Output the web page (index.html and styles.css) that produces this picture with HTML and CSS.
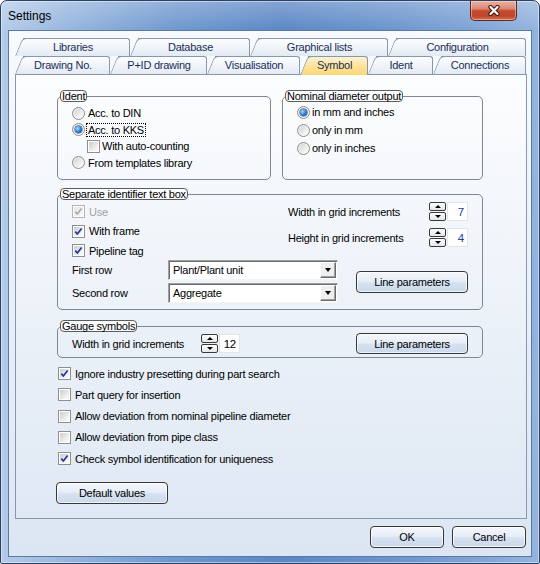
FILE: index.html
```html
<!DOCTYPE html>
<html>
<head>
<meta charset="utf-8">
<title>Settings</title>
<link rel="stylesheet" href="styles.css">
</head>
<body>
<div class="window">
  <div class="titlebar">
    <span class="title">Settings</span>
    <div class="close">
      <svg width="14" height="11" viewBox="0 0 14 11"><path d="M3.5 2 L10.5 9 M10.5 2 L3.5 9" stroke="#3a140c" stroke-width="4.2" stroke-linecap="round"/><path d="M3.5 2 L10.5 9 M10.5 2 L3.5 9" stroke="#fff" stroke-width="2.2" stroke-linecap="round"/></svg>
    </div>
  </div>
  <div class="client">
    <div class="tabrow">
      <div class="tab w-lib"><span>Libraries</span></div>
      <div class="tab w-db"><span>Database</span></div>
      <div class="tab w-gl"><span>Graphical lists</span></div>
      <div class="tab w-cfg"><span>Configuration</span></div>
    </div>
    <div class="tabrow">
      <div class="tab w-dn"><span>Drawing No.</span></div>
      <div class="tab w-pid"><span>P+ID drawing</span></div>
      <div class="tab w-vis"><span>Visualisation</span></div>
      <div class="tab sel w-sym"><span>Symbol</span></div>
      <div class="tab w-id"><span>Ident</span></div>
      <div class="tab w-con"><span>Connections</span></div>
    </div>
    <div class="panel">
      <div class="toprow">
        <fieldset class="group g-ident">
          <legend>Ident</legend>
          <div class="fs-body ident-body">
            <div class="row r-ident"><span class="radio"></span><span>Acc. to DIN</span></div>
            <div class="row r-ident"><span class="radio on"><span class="dot"></span></span><span class="focus">Acc. to KKS</span></div>
            <div class="row r-ident indent"><span class="cb"><span class="cb-in"></span></span><span class="cb-label">With auto-counting</span></div>
            <div class="row r-ident"><span class="radio"></span><span>From templates library</span></div>
          </div>
        </fieldset>
        <fieldset class="group g-nom">
          <legend>Nominal diameter output</legend>
          <div class="fs-body nom-body">
            <div class="row r-nom"><span class="radio on"><span class="dot"></span></span><span class="rlabel">in mm and inches</span></div>
            <div class="row r-nom"><span class="radio"></span><span class="rlabel">only in mm</span></div>
            <div class="row r-nom"><span class="radio"></span><span class="rlabel">only in inches</span></div>
          </div>
        </fieldset>
      </div>

      <fieldset class="group g-sep">
        <legend>Separate identifier text box</legend>
        <div class="fs-body sep-body">
          <div class="sep-top">
            <div class="sep-left">
              <div class="row h19 disabled"><span class="cb dis"><span class="cb-in"><svg width="9" height="9" viewBox="0 0 9 9"><path d="M1.3 4.6 L3.4 7 L7.6 1.6" fill="none" stroke="#a8a8a8" stroke-width="1.7"/></svg></span></span><span class="cb-label wide">Use</span></div>
              <div class="row h20"><span class="cb"><span class="cb-in"><svg width="9" height="9" viewBox="0 0 9 9"><path d="M1.3 4.6 L3.4 7 L7.6 1.6" fill="none" stroke="#1f3599" stroke-width="1.7"/></svg></span></span><span class="cb-label wide">With frame</span></div>
              <div class="row h19"><span class="cb"><span class="cb-in"><svg width="9" height="9" viewBox="0 0 9 9"><path d="M1.3 4.6 L3.4 7 L7.6 1.6" fill="none" stroke="#1f3599" stroke-width="1.7"/></svg></span></span><span class="cb-label wide">Pipeline tag</span></div>
            </div>
            <div class="sep-right">
              <div class="spinrow">
                <span class="slabel">Width in grid increments</span>
                <div class="spin"><div class="spin-btns"><span class="sb"><span class="tri-up"></span></span><span class="sb"><span class="tri-down-s"></span></span></div><span class="val blue">7</span></div>
              </div>
              <div class="spinrow">
                <span class="slabel">Height in grid increments</span>
                <div class="spin"><div class="spin-btns"><span class="sb"><span class="tri-up"></span></span><span class="sb"><span class="tri-down-s"></span></span></div><span class="val blue">4</span></div>
              </div>
            </div>
          </div>
          <div class="sep-grid">
            <span class="glabel">First row</span>
            <div class="combo"><span class="ctext">Plant/Plant unit</span><span class="carrow"><span class="tri-down"></span></span></div>
            <button class="btn lp">Line parameters</button>
            <span class="glabel">Second row</span>
            <div class="combo"><span class="ctext">Aggregate</span><span class="carrow"><span class="tri-down"></span></span></div>
          </div>
        </div>
      </fieldset>

      <fieldset class="group g-gauge">
        <legend>Gauge symbols</legend>
        <div class="fs-body gauge-body">
          <span class="glabel2">Width in grid increments</span>
          <div class="spin"><div class="spin-btns"><span class="sb"><span class="tri-up"></span></span><span class="sb"><span class="tri-down-s"></span></span></div><span class="val">12</span></div>
          <button class="btn lp2">Line parameters</button>
        </div>
      </fieldset>

      <div class="checks">
        <div class="crow"><span class="cb"><span class="cb-in"><svg width="9" height="9" viewBox="0 0 9 9"><path d="M1.3 4.6 L3.4 7 L7.6 1.6" fill="none" stroke="#1f3599" stroke-width="1.7"/></svg></span></span><span class="ck-label">Ignore industry presetting during part search</span></div>
        <div class="crow"><span class="cb"><span class="cb-in"></span></span><span class="ck-label">Part query for insertion</span></div>
        <div class="crow"><span class="cb"><span class="cb-in"></span></span><span class="ck-label">Allow deviation from nominal pipeline diameter</span></div>
        <div class="crow"><span class="cb"><span class="cb-in"></span></span><span class="ck-label">Allow deviation from pipe class</span></div>
        <div class="crow"><span class="cb"><span class="cb-in"><svg width="9" height="9" viewBox="0 0 9 9"><path d="M1.3 4.6 L3.4 7 L7.6 1.6" fill="none" stroke="#1f3599" stroke-width="1.7"/></svg></span></span><span class="ck-label">Check symbol identification for uniqueness</span></div>
      </div>

      <button class="btn defbtn">Default values</button>
    </div>
    <div class="footer">
      <button class="btn fbtn">OK</button>
      <button class="btn fbtn">Cancel</button>
    </div>
  </div>
</div>
</body>
</html>
```

FILE: styles.css
```css
* { box-sizing: border-box; }
html, body { margin: 0; padding: 0; }
body {
  width: 540px; height: 564px; overflow: hidden;
  font-family: "Liberation Sans", Arial, sans-serif;
  font-size: 11px; letter-spacing: -0.25px; color: #000; background: #fff;
}

.window {
  width: 540px; height: 564px;
  border: 1px solid #2d4262;
  border-radius: 7px 7px 2px 2px;
  background:
    linear-gradient(rgba(255,255,255,0.25), rgba(255,255,255,0) 30px),
    linear-gradient(90deg, #b4cbe9 0%, #93b3dd 14%, #6f98cf 32%, #5b87c5 52%, #6a94cd 72%, #7ea3d6 88%, #94b4df 100%);
  padding: 0 7px 7px 7px;
  display: flex; flex-direction: column;
  box-shadow: inset 0 0 0 1px rgba(255,255,255,0.45);
}

.titlebar { height: 29px; display: flex; justify-content: space-between; align-items: flex-start; flex: none; }
.title { font-size: 12px; letter-spacing: 0; line-height: 14px; margin-top: 8px; color: #000; }
.close {
  width: 47px; height: 20px; margin-right: 15px;
  border: 1px solid #5b2a20; border-top: none;
  border-radius: 0 0 5px 5px;
  background: linear-gradient(#eab0a1 0%, #da8a74 40%, #c6492e 52%, #c0462b 80%, #d7704f 100%);
  box-shadow: inset 0 0 0 1px rgba(255,230,220,0.45);
  display: flex; align-items: center; justify-content: center;
}

.client {
  flex: 1;
  border: 1px solid #5b7aa1;
  background: linear-gradient(#f8fafd, #dce6f3);
  padding: 7px 5px 8px 6px;
  display: flex; flex-direction: column;
}

/* tabs */
.tabrow { display: flex; height: 18px; flex: none; }
.tab {
  position: relative; height: 18px;
  display: flex; align-items: center; justify-content: center;
  color: #1b2e58; padding-left: 1px;
}
.tab span { position: relative; z-index: 3; }
.tab::before {
  content: ""; position: absolute; left: 0; top: 0; bottom: 0; width: 24px;
  border-left: 1px solid #8797ad; border-top: 1px solid #8797ad;
  border-top-left-radius: 5px;
  background: linear-gradient(#fdfeff, #e3eaf3);
  transform: skewX(-22deg); transform-origin: bottom left;
  z-index: 2;
}
.tab::after {
  content: ""; position: absolute; left: 8px; right: 0; top: 0; bottom: 0;
  border-top: 1px solid #8797ad; border-right: 1px solid #8797ad;
  border-top-right-radius: 3px;
  background: linear-gradient(#fdfeff, #e3eaf3);
  z-index: 1;
}
.tab.sel::before, .tab.sel::after {
  background: linear-gradient(#fff4d2, #fde4a0 45%, #fcd774);
  bottom: -1px;
}
.w-lib { width: 115px; } .w-db { width: 120px; } .w-gl { width: 138px; } .w-cfg { width: 138px; }
.w-dn { width: 95px; } .w-pid { width: 97px; } .w-vis { width: 93px; } .w-sym { width: 68px; }
.w-id { width: 65px; } .w-con { width: 93px; }

/* panel */
.panel {
  width: 512px; height: 445px; flex: none;
  border: 1px solid #8797ad;
  background: linear-gradient(#fcfdfe, #dfe8f4);
  padding: 15px 0 0 41px;
  display: flex; flex-direction: column; align-items: flex-start;
}

fieldset.group {
  margin: 0; padding: 0; min-width: 0;
  border: 1px solid #7d8896; border-radius: 5px;
}
legend {
  margin-left: 2px; padding: 0 1px;
  height: 12px; line-height: 10px;
  border: 1px solid #5c5c5c; border-radius: 4px;
  background: #fbfcfe;
}

.toprow { display: flex; gap: 11px; flex: none; }
fieldset.g-ident { width: 214px; height: 90px; }
fieldset.g-nom { width: 201px; height: 90px; }
.fs-body { padding-left: 14px; padding-right: 14px; }
.ident-body { padding-top: 3px; }
.nom-body { padding-top: 1px; }
.row { display: flex; align-items: center; }
.r-ident { height: 16.5px; }
.r-nom { height: 18px; }
.indent { padding-left: 15px; }
.h19 { height: 19px; } .h20 { height: 20px; }

.radio {
  width: 13px; height: 13px; flex: none; margin-right: 3px;
  border-radius: 50%; border: 1px solid #8b8c8c;
  background: linear-gradient(135deg, #cfcfcf, #f6f6f6 75%);
  box-shadow: inset 0 0 0 1px rgba(255,255,255,0.6);
  display: flex; align-items: center; justify-content: center;
}
.radio .dot {
  width: 7px; height: 7px; border-radius: 50%;
  background: radial-gradient(circle at 35% 35%, #a6dcff 0%, #2b78d0 55%, #0f3f8e 100%);
  box-shadow: 0 0 0 0.5px #173a73;
}
.rlabel { margin-left: -1px; }
.focus { outline: 1px dotted #000; outline-offset: 0; padding: 0 1px; margin-left: -1px; }

.cb {
  width: 13px; height: 13px; flex: none;
  border: 1px solid #8e8f8f; background: #fff; padding: 1px;
  display: flex;
}
.cb-in {
  flex: 1; display: flex; align-items: center; justify-content: center;
  background: linear-gradient(135deg, #cdcdcd, #f6f6f6 80%);
}
.cb.dis { border-color: #b5b5b5; }
.cb.dis .cb-in { background: linear-gradient(135deg, #e4e4e4, #f7f7f7 80%); }
.cb-label { margin-left: 2px; }
.cb-label.wide { margin-left: 4px; }
.disabled { color: #a3a3a3; }

/* separate identifier */
fieldset.g-sep { width: 426px; height: 122px; margin-top: 8px; flex: none; }
.sep-body { padding-top: 2px; }
.sep-top { display: flex; }
.sep-left { width: 216px; }
.sep-right { flex: 1; display: flex; flex-direction: column; gap: 7px; }
.spinrow { display: flex; align-items: center; height: 19px; }
.slabel { flex: 1; }
.spin { display: flex; height: 19px; flex: none; }
.spin-btns { width: 17px; display: flex; flex-direction: column; gap: 1px; }
.sb {
  flex: 1; border: 1px solid #3a3a3a; border-radius: 2px;
  background: linear-gradient(#ffffff, #e6e6e6);
  display: flex; align-items: center; justify-content: center;
}
.tri-up { width: 0; height: 0; border-left: 3px solid transparent; border-right: 3px solid transparent; border-bottom: 3px solid #000; }
.tri-down-s { width: 0; height: 0; border-left: 3px solid transparent; border-right: 3px solid transparent; border-top: 3px solid #000; }
.val {
  width: 21px; background: #fff; border: 1px solid #e2e5ea; margin-left: 1px;
  display: flex; align-items: center; justify-content: flex-end; padding-right: 3px;
  font-size: 11.5px;
}
.val.blue { color: #1d3b9a; }

.sep-grid {
  display: grid;
  grid-template-columns: 96px 170px 1fr;
  grid-template-rows: 20px 20px;
  row-gap: 3px;
  align-items: center;
}
.glabel { align-self: center; }
.combo {
  height: 20px; display: flex; align-items: center;
  background: #fff;
  border: 1px solid; border-color: #a0a0a0 #f4f4f4 #f4f4f4 #a0a0a0;
  box-shadow: inset 1px 1px 0 #6b6b6b;
  padding: 1px 1px 1px 4px;
}
.ctext { flex: 1; }
.carrow {
  width: 16px; height: 16px;
  background: #efefef;
  border: 1px solid; border-color: #fff #6b6b6b #6b6b6b #fff;
  box-shadow: inset -1px -1px 0 #a0a0a0;
  display: flex; align-items: center; justify-content: center;
}
.tri-down { width: 0; height: 0; border-left: 3.5px solid transparent; border-right: 3.5px solid transparent; border-top: 4px solid #000; }

.btn {
  font-family: inherit; font-size: 11px; letter-spacing: -0.25px; color: #000;
  height: 22px; padding: 0; margin: 0;
  border: 1px solid #383838; border-radius: 4px;
  background: linear-gradient(#f4f7fb 0%, #e7eef7 45%, #d5e1f0 55%, #cbd9eb 100%);
  box-shadow: inset 0 0 0 1px rgba(255,255,255,0.7);
  display: flex; align-items: center; justify-content: center;
}
.lp { grid-column: 3; grid-row: 1 / span 2; justify-self: end; width: 112px; height: 22px; align-self: center; }

/* gauge */
fieldset.g-gauge { width: 426px; height: 38px; margin-top: 10px; flex: none; }
.gauge-body { display: flex; align-items: center; height: 21px; margin-top: 1px; }
.glabel2 { width: 129px; }
.lp2 { width: 112px; height: 21px; margin-left: auto; }

/* checks */
.checks { margin-top: 5px; margin-left: 1px; flex: none; }
.crow { height: 21.25px; display: flex; align-items: center; }
.ck-label { margin-left: 4px; }

.defbtn { width: 112px; margin-top: 12.75px; margin-left: -1px; flex: none; }

/* footer */
.footer { display: flex; justify-content: flex-end; gap: 8px; margin-top: 7px; }
.fbtn { width: 74px; }
```
